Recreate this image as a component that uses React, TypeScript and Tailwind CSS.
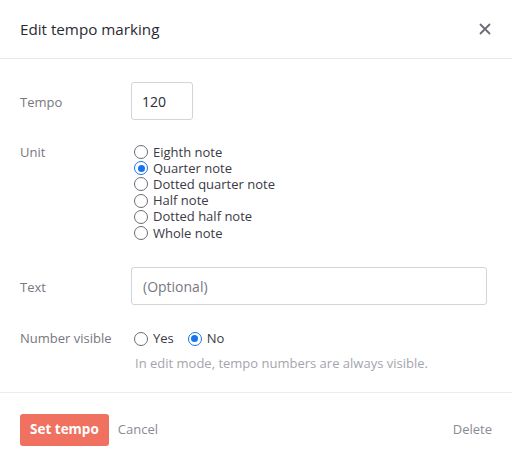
import { useState } from 'react';

const units = [
  'Eighth note',
  'Quarter note',
  'Dotted quarter note',
  'Half note',
  'Dotted half note',
  'Whole note',
];

const Radio = ({ checked, label, onClick }: any) => (
  <label className="flex items-center gap-[5px] h-[16.2px] cursor-pointer" onClick={onClick}>
    <span
      className={
        checked
          ? 'w-[14px] h-[14px] rounded-full border-[1.5px] border-[#1a73e8] flex items-center justify-center'
          : 'w-[14px] h-[14px] rounded-full border-[1.5px] border-[#6b6b76]'
      }
    >
      {checked && <span className="w-[7px] h-[7px] rounded-full bg-[#1a73e8]" />}
    </span>
    <span className="text-[13px] leading-[15px] text-[#3a3a44]">{label}</span>
  </label>
);

export default function App() {
  const [unit, setUnit] = useState(1);
  const [visible, setVisible] = useState(false);

  return (
    <div className="w-[512px] h-[466px] bg-white flex flex-col font-['Open_Sans',sans-serif]">
      <div className="h-[59px] flex items-center justify-between px-5 border-b border-[#e8e8ec]">
        <div className="text-[15.2px] text-[#2a2a33]">Edit tempo marking</div>
        <svg width="12" height="12" viewBox="0 0 12 12" className="mr-[1px]">
          <path d="M1.5 1.5 L10.5 10.5 M10.5 1.5 L1.5 10.5" stroke="#6b6b76" strokeWidth="1.8" strokeLinecap="round" />
        </svg>
      </div>

      <div className="flex-1 pl-5 pr-[25px] pt-[23px] border-b border-[#ececef]">
        <div className="grid grid-cols-[111px_1fr] items-center">
          <p className="text-[13px] pt-[3px] text-[#777780]">Tempo</p>
          <input
            defaultValue="120"
            className="w-[62px] h-[38px] rounded-[3px] border border-[#d3d3d8] px-[10px] text-[14px] text-[#2a2a33] outline-none"
          />
        </div>

        <div className="grid grid-cols-[111px_1fr] mt-[24px]">
          <p className="text-[13px] leading-[16px] text-[#777780]">Unit</p>
          <div className="flex flex-col pl-[3px]">
            {units.map((u, i) => (
              <Radio key={u} label={u} checked={unit === i} onClick={() => setUnit(i)} />
            ))}
          </div>
        </div>

        <div className="grid grid-cols-[111px_1fr] items-center mt-[26px]">
          <p className="text-[13px] pt-[3px] text-[#777780]">Text</p>
          <input
            placeholder="(Optional)"
            className="w-full h-[38px] rounded-[3px] border border-[#d3d3d8] px-[11px] text-[14px] text-[#2a2a33] placeholder:text-[#77777f] outline-none"
          />
        </div>

        <div className="grid grid-cols-[111px_1fr] items-center mt-[24px]">
          <p className="text-[13px] text-[#777780]">Number visible</p>
          <div className="flex gap-[14px] pl-[3px]">
            <Radio label="Yes" checked={visible} onClick={() => setVisible(true)} />
            <Radio label="No" checked={!visible} onClick={() => setVisible(false)} />
          </div>
        </div>
        <p className="ml-[115px] mt-[5px] text-[13px] text-[#a5a5ad]">
          In edit mode, tempo numbers are always visible.
        </p>
      </div>

      <div className="h-[73px] flex items-center justify-between px-5">
        <div className="flex items-center gap-[9px]">
          <button className="h-[32px] px-[10px] rounded-[3px] bg-[#f07160] text-white text-[13.5px] font-bold">
            Set tempo
          </button>
          <button className="text-[13px] text-[#8a8a93]">Cancel</button>
        </div>
        <button className="text-[13px] text-[#8a8a93]">Delete</button>
      </div>
    </div>
  );
}
